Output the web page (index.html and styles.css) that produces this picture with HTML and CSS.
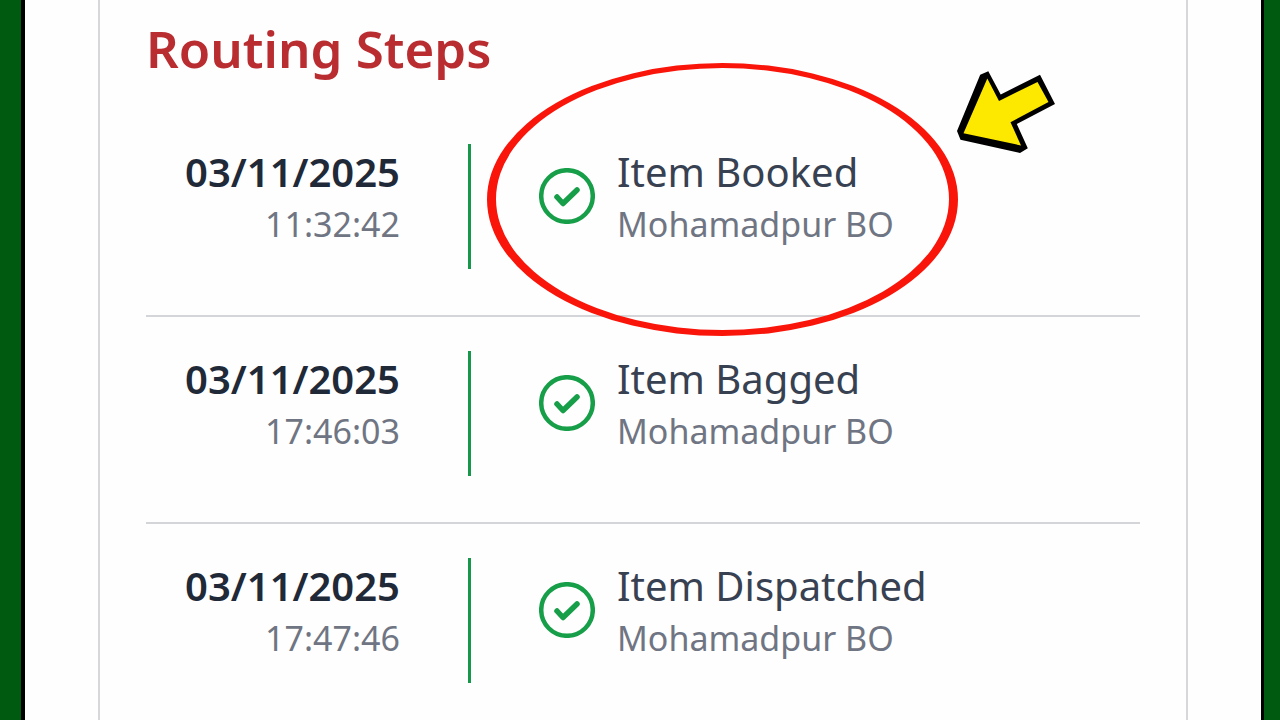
FILE: index.html
```
<!DOCTYPE html>
<html lang="en">
<head>
<meta charset="utf-8">
<meta name="viewport" content="width=device-width, initial-scale=1">
<title>Routing Steps</title>
<link rel="stylesheet" href="styles.css">
</head>
<body class="page">
<svg class="defs" aria-hidden="true">
  <symbol id="check" viewBox="0 0 56 56">
    <circle cx="28" cy="28" r="25.800" fill="none" stroke="currentColor" stroke-width="4.500"/>
    <path d="M18 29L24 35.500L38 22" fill="none" stroke="currentColor" stroke-width="5.500" stroke-linecap="round" stroke-linejoin="round"/>
  </symbol>
</svg>
<main class="card">
  <h1 class="title">Routing Steps</h1>
  <ol class="steps">
    <li class="step">
      <div class="when"><div class="date">03/11/2025</div><div class="sub">11:32:42</div></div>
      <div class="bar"></div>
      <svg class="icon" aria-hidden="true"><use href="#check"/></svg>
      <div class="what"><div class="event">Item Booked</div><div class="sub">Mohamadpur BO</div></div>
      <svg class="ring" viewBox="0 0 471 273" aria-hidden="true">
        <path fill="#f9150a" fill-rule="evenodd" d="M0 136.500a235.500 136.500 0 1 0 471 0a235.500 136.500 0 1 0-471 0zM9 136a226.500 131 0 1 0 453 0a226.500 131 0 1 0-453 0z"/>
      </svg>
      <svg class="arrow" viewBox="0 0 98 82" aria-hidden="true">
        <path d="M31.300.200L43.700 23.500L83 3.800L98 33L59.800 53L70.800 77.300L63 82L3.500 68.800L0 60L23.200 3.800z"/>
        <path fill="#fde800" d="M30.300 7.500L42 30L80.500 11L91.500 31L53.500 51.300L64 74.500L6.500 62.300z"/>
      </svg>
    </li>
    <li class="step">
      <div class="when"><div class="date">03/11/2025</div><div class="sub">17:46:03</div></div>
      <div class="bar"></div>
      <svg class="icon" aria-hidden="true"><use href="#check"/></svg>
      <div class="what"><div class="event">Item Bagged</div><div class="sub">Mohamadpur BO</div></div>
    </li>
    <li class="step">
      <div class="when"><div class="date">03/11/2025</div><div class="sub">17:47:46</div></div>
      <div class="bar"></div>
      <svg class="icon" aria-hidden="true"><use href="#check"/></svg>
      <div class="what"><div class="event">Item Dispatched</div><div class="sub">Mohamadpur BO</div></div>
    </li>
  </ol>
</main>
</body>
</html>
```
FILE: styles.css
```
* {
  box-sizing: border-box;
}

.page {
  display: flex;
  min-height: 100vh;
  margin: 0;
  padding: 0 92px 0 98px;
  background: linear-gradient(to right, #005a10 21px, #000 21px 25px, #fefefe 25px calc(100% - 19px), #000 calc(100% - 19px) calc(100% - 16px), #005a10 calc(100% - 16px));
  font-family: "Noto Sans", sans-serif;
}

.defs {
  position: absolute;
  width: 0;
  height: 0;
}

.card {
  flex: 1;
  padding: 14px 46px 0;
  border: solid #d6d7da;
  border-width: 0 2px;
}

.title {
  margin: 0 0 62px;
  color: #b92c30;
  font-size: 51px;
  font-weight: 600;
  line-height: 68px;
}

.steps {
  margin: 0;
  padding: 0;
  list-style: none;
}

.step {
  position: relative;
  display: flex;
  align-items: flex-start;
  padding-bottom: 46px;
}

.step + .step {
  padding-top: 34px;
  border-top: 2px solid #d3d5d9;
}

.step:last-child {
  padding-bottom: 0;
}

.when,
.what {
  padding-top: 2px;
  line-height: 52px;
}

.when {
  width: 254px;
  text-align: right;
}

.date {
  color: #1f2937;
  font-size: 40px;
  font-weight: 600;
}

.event {
  color: #374151;
  font-size: 40px;
}

.sub {
  color: #6f7582;
  font-size: 34px;
}

.bar {
  width: 3px;
  height: 125px;
  margin: 0 68px;
  background: #16984a;
}

.icon {
  width: 56px;
  height: 56px;
  margin: 24px 22px 0 0;
  color: #169e48;
}

.ring {
  position: absolute;
  z-index: 1;
  left: 341px;
  top: -81px;
  width: 471px;
  height: 273px;
}

.arrow {
  position: absolute;
  left: 811px;
  top: -73px;
  width: 98px;
  height: 82px;
}
```
